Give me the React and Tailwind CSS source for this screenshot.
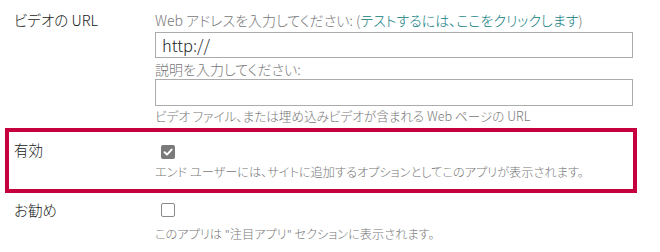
import React from 'react';

const font = "font-['Noto_Sans_CJK_JP',sans-serif] font-light [font-feature-settings:'palt']";

const Check = ({ on }) =>
    on ? (
        <span className="ml-[6px] flex h-[14px] w-[14px] items-center justify-center rounded-[2px] bg-[#7a7a7a]">
            <svg width="10" height="10" viewBox="0 0 10 10">
                <path d="M1.6 5.2 L4 7.6 L8.6 2.6" fill="none" stroke="#fff" strokeWidth="2" strokeLinecap="round" strokeLinejoin="round" />
            </svg>
        </span>
    ) : (
        <span className="ml-[6px] block h-[14px] w-[14px] rounded-[2px] border border-[#8a8a8a] bg-white" />
    );

const App = () => {
    return (
        <div className={`h-[252px] w-[660px] bg-white pl-[5px] ${font}`}>
            <div className="flex w-[632px] pl-[9px] pt-[10px]">
                <div className="w-[141px] text-[14.5px] leading-[20px] text-[#222]">ビデオの URL</div>
                <div className="flex-1 pr-[4px]">
                    <div className="text-[14px] leading-[20px] text-[#777]">
                        Web アドレスを入力してください: (
                        <span className="text-[#0b7a80]">テストするには、ここをクリックします</span>)
                    </div>
                    <div className="mt-[2px] flex h-[26px] items-center border border-[#ababab] px-[6px] text-[16.5px] text-[#222]">http://</div>
                    <div className="mt-[1px] text-[14px] leading-[20px] text-[#777]">説明を入力してください:</div>
                    <div className="h-[27px] border border-[#ababab]" />
                    <div className="text-[12.6px] leading-[20px] text-[#777]">ビデオ ファイル、または埋め込みビデオが含まれる Web ページの URL</div>
                </div>
            </div>

            <div className="mt-[2px] flex h-[65px] w-[632px] border-4 border-[#c6003e] pl-[5px] pt-[8px]">
                <div className="w-[141px] text-[14.5px] leading-[20px] text-[#222]">有効</div>
                <div className="flex-1">
                    <div className="flex h-[20px] items-center pt-[4px]">
                        <Check on />
                    </div>
                    <div className="mt-[2px] text-[12.2px] leading-[20px] text-[#777]">
                        エンド ユーザーには、サイトに追加するオプションとしてこのアプリが表示されます。
                    </div>
                </div>
            </div>

            <div className="flex w-[632px] pl-[9px] pt-[7px]">
                <div className="w-[141px] text-[14.5px] leading-[20px] text-[#222]">お勧め</div>
                <div className="flex-1">
                    <div className="flex h-[20px] items-center">
                        <Check />
                    </div>
                    <div className="mt-[4px] text-[12.2px] leading-[20px] text-[#777]">
                        このアプリは "注目アプリ" セクションに表示されます。
                    </div>
                </div>
            </div>
        </div>
    );
};

export default App;
